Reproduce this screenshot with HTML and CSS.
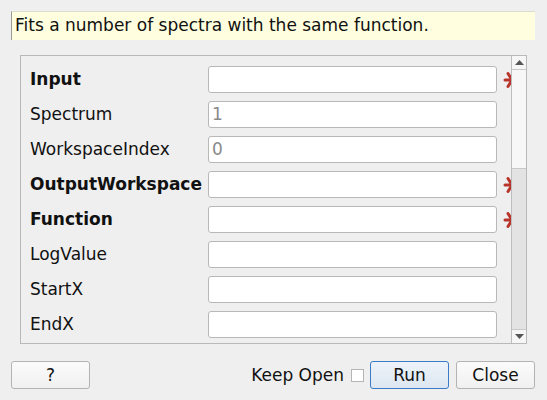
FILE: index.html
```html
<!DOCTYPE html>
<html>
<head>
<meta charset="utf-8">
<link rel="stylesheet" href="styles.css">
</head>
<body>
<div class="dialog">
  <div class="banner">Fits a number of spectra with the same function.</div>
  <div class="frame">
    <div class="viewport">
      <div class="rows">
        <div class="label bold">Input</div><div class="field"></div><div class="star"><svg width="18" height="18" viewBox="0 0 18 18"><g stroke="#b8342a" stroke-width="3" stroke-linecap="round"><line x1="2" y1="9" x2="16" y2="9"/><line x1="5" y1="2.5" x2="13" y2="15.5"/><line x1="5" y1="15.5" x2="13" y2="2.5"/></g></svg></div>
        <div class="label">Spectrum</div><div class="field placeholder">1</div><div></div>
        <div class="label">WorkspaceIndex</div><div class="field placeholder">0</div><div></div>
        <div class="label bold">OutputWorkspace</div><div class="field"></div><div class="star"><svg width="18" height="18" viewBox="0 0 18 18"><g stroke="#b8342a" stroke-width="3" stroke-linecap="round"><line x1="2" y1="9" x2="16" y2="9"/><line x1="5" y1="2.5" x2="13" y2="15.5"/><line x1="5" y1="15.5" x2="13" y2="2.5"/></g></svg></div>
        <div class="label bold">Function</div><div class="field"></div><div class="star"><svg width="18" height="18" viewBox="0 0 18 18"><g stroke="#b8342a" stroke-width="3" stroke-linecap="round"><line x1="2" y1="9" x2="16" y2="9"/><line x1="5" y1="2.5" x2="13" y2="15.5"/><line x1="5" y1="15.5" x2="13" y2="2.5"/></g></svg></div>
        <div class="label">LogValue</div><div class="field"></div><div></div>
        <div class="label">StartX</div><div class="field"></div><div></div>
        <div class="label">EndX</div><div class="field"></div><div></div>
      </div>
    </div>
    <div class="scrollbar">
      <div class="sb-btn"><svg width="9" height="5" viewBox="0 0 9 5"><polygon points="0,5 9,5 4.5,0" fill="#555"/></svg></div>
      <div class="sb-handle"></div>
      <div class="sb-track"></div>
      <div class="sb-btn sb-down"><svg width="9" height="5" viewBox="0 0 9 5"><polygon points="0,0 9,0 4.5,5" fill="#555"/></svg></div>
    </div>
  </div>
  <div class="footer">
    <button class="btn help">?</button>
    <div class="spacer"></div>
    <span class="keep">Keep Open</span>
    <span class="check"></span>
    <button class="btn run">Run</button>
    <button class="btn close">Close</button>
  </div>
</div>
</body>
</html>
```
FILE: styles.css
```css
html, body {
  margin: 0;
  padding: 0;
  background: #efefef;
}
body {
  font-family: "DejaVu Sans", sans-serif;
  font-size: 17px;
  color: #111;
}
.dialog {
  width: 547px;
  height: 400px;
  box-sizing: border-box;
  padding: 11px 12px 0 11px;
  display: flex;
  flex-direction: column;
}
.banner {
  height: 29px;
  box-sizing: border-box;
  background: #ffffdf;
  border-left: 1px solid #9a9a9a;
  border-top: 1px solid #dcdcd0;
  padding: 2px 0 0 3px;
  line-height: 22px;
  white-space: nowrap;
}
.frame {
  margin: 15px 8px 0 9px;
  height: 289px;
  box-sizing: border-box;
  border: 1px solid #b9b9b9;
  display: flex;
}
.viewport {
  flex: 1;
  overflow: hidden;
  position: relative;
}
.rows {
  padding: 10px 0 0 9px;
  display: grid;
  grid-template-columns: 171px 289px 20px;
  column-gap: 7px;
  row-gap: 8px;
  align-items: center;
}
.label {
  white-space: nowrap;
  line-height: 27px;
}
.bold { font-weight: bold; }
.field {
  height: 27px;
  box-sizing: border-box;
  background: #fff;
  border: 1px solid #b8b8b8;
  border-radius: 3px;
  padding: 0 0 0 3px;
  line-height: 25px;
}
.placeholder { color: #8a8a8a; }
.star {
  height: 18px;
  display: flex;
  align-items: center;
}
.star svg { display: block; margin-left: -1px; margin-top: 1px; }
.scrollbar {
  width: 15px;
  box-sizing: border-box;
  border-left: 1px solid #bdbdbd;
  display: flex;
  flex-direction: column;
  background: #e3e3e3;
}
.sb-btn {
  height: 13px;
  background: #f6f6f6;
  border-bottom: 1px solid #c8c8c8;
  display: flex;
  align-items: center;
  justify-content: center;
}
.sb-down {
  border-bottom: none;
  border-top: 1px solid #c8c8c8;
}
.sb-handle {
  height: 98px;
  background: #f7f7f7;
  border-bottom: 1px solid #c8c8c8;
}
.sb-track { flex: 1; }
.footer {
  margin-top: 17px;
  display: flex;
  align-items: center;
  height: 28px;
}
.spacer { flex: 1; }
.btn {
  font-family: "DejaVu Sans", sans-serif;
  font-size: 17px;
  color: #111;
  height: 28px;
  width: 79px;
  box-sizing: border-box;
  border: 1px solid #b3b3b3;
  border-radius: 3px;
  background: linear-gradient(#fbfbfb, #f0f0f0);
  padding: 0;
  margin: 0;
}
.keep { margin-right: 7px; }
.check {
  width: 13px;
  height: 13px;
  box-sizing: border-box;
  border: 1px solid #b5b5b5;
  background: #fff;
  margin-right: 6px;
}
.run {
  border-color: #3a7bc8;
  background: linear-gradient(#edf3f9, #dde7f1);
  margin-right: 7px;
}
```
